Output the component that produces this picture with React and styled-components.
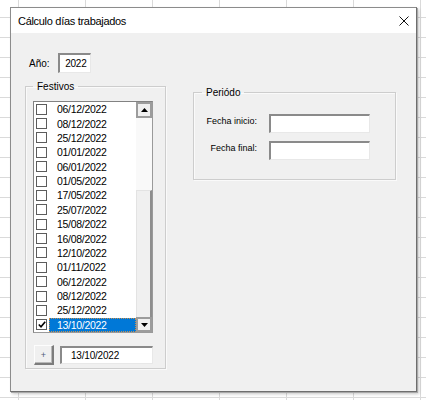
import React from "react";
import styled, { createGlobalStyle } from "styled-components";

const GlobalStyle = createGlobalStyle`
  html, body { margin: 0; padding: 0; }
  body { background: #fff; font-family: "Liberation Sans", Arial, sans-serif; color: #000; }
`;

const Sheet = styled.div`
  width: 426px;
  height: 400px;
  box-sizing: border-box;
  padding: 7px 0 0 10px;
  overflow: hidden;
  background-color: #fff;
  background-image: linear-gradient(to right, #dadada 1px, transparent 1px),
    linear-gradient(to bottom, #dadada 1px, transparent 1px);
  background-size: 67px 20px;
  background-position: 18px 17px;
`;

const Dialog = styled.div`
  width: 407px;
  height: 385px;
  box-sizing: border-box;
  border: 1px solid #8c8c8c;
  border-right-color: #6e6e6e;
  border-bottom-color: #6e6e6e;
  box-shadow: 1px 1px 0 #a9a9a9, 2px 2px 3px rgba(0, 0, 0, 0.22);
  background: #f0f0f0;
  display: flex;
  flex-direction: column;
`;

const TitleBar = styled.div`
  height: 25px;
  flex: none;
  background: #fff;
  display: flex;
  align-items: center;
  justify-content: space-between;
  padding: 0 7px 0 7px;
`;

const Title = styled.span`
  font-size: 11px;
  letter-spacing: -0.3px;
  color: #000;
`;

const Body = styled.div`
  flex: 1;
  padding: 20px 0 0 14px;
`;

const YearRow = styled.div`
  display: flex;
  align-items: center;
  gap: 8px;
  margin-left: 4px;
  height: 20px;
`;

const Label = styled.span`
  font-size: ${(p) => p.$size || 10}px;
  line-height: ${(p) => (p.$size ? "10px" : "normal")};
  padding-top: ${(p) => (p.$size ? "2px" : "0")};
  white-space: nowrap;
`;

const TextBox = styled.div`
  box-sizing: border-box;
  width: ${(p) => p.$w}px;
  height: ${(p) => p.$h}px;
  background: #fff;
  border-style: solid;
  border-width: 2px 1px 1px 2px;
  border-color: #8a8a8a #e8e8e8 #e8e8e8 #8a8a8a;
  display: flex;
  align-items: center;
  justify-content: ${(p) => (p.$right ? "flex-end" : "flex-start")};
  padding: ${(p) => (p.$right ? "0 3px 0 0" : "0 0 0 9px")};
  font-size: 10px;
  letter-spacing: -0.2px;
`;

const Columns = styled.div`
  display: flex;
  align-items: flex-start;
  gap: 27px;
  margin-top: 8px;
`;

const Frame = styled.fieldset`
  margin: ${(p) => p.$top || 0}px 0 0 0;
  min-width: 0;
  box-sizing: border-box;
  width: ${(p) => p.$w}px;
  border: 1px solid #cdcdcd;
  box-shadow: 1px 1px 0 #fafafa, inset 1px 1px 0 #fafafa;
  padding: ${(p) => p.$pad};
`;

const Legend = styled.legend`
  font-size: 10px;
  line-height: 11px;
  padding: 0 4px;
  margin-left: ${(p) => p.$ml || 0}px;
`;

const ListBox = styled.div`
  box-sizing: border-box;
  width: 120px;
  height: 232px;
  background: #fff;
  border: 1px solid;
  border-color: #828282 #9a9a9a #9a9a9a #828282;
  display: flex;
`;

const Items = styled.div`
  flex: 1;
  display: flex;
  flex-direction: column;
`;

const Row = styled.div`
  height: 14.375px;
  display: flex;
  align-items: center;
`;

const Check = styled.span`
  box-sizing: border-box;
  width: 11px;
  height: 11px;
  margin-left: 2px;
  flex: none;
  border: 1.5px solid #5c5c5c;
  background: #fff;
  display: flex;
  align-items: center;
  justify-content: center;
`;

const ItemText = styled.span`
  flex: 1;
  height: 100%;
  box-sizing: border-box;
  margin-left: 2px;
  padding-left: 8px;
  display: flex;
  align-items: center;
  font-size: 10.5px;
  letter-spacing: -0.3px;
  background: ${(p) => (p.$selected ? "#0078d7" : "transparent")};
  color: ${(p) => (p.$selected ? "#fff" : "#000")};
  outline: ${(p) => (p.$selected ? "1px dotted #c89050" : "none")};
  outline-offset: -1px;
`;

const ScrollBar = styled.div`
  width: 16px;
  flex: none;
  display: flex;
  flex-direction: column;
  background: #f7f7f7;
`;

const ScrollBtn = styled.div`
  box-sizing: border-box;
  height: ${(p) => p.$h}px;
  flex: none;
  background: #f0f0f0;
  border: 2px solid #9c9c9c;
  display: flex;
  align-items: center;
  justify-content: center;
`;

const Track = styled.div`
  height: ${(p) => p.$h}px;
  flex: none;
  background: #f9f9f9;
`;

const Thumb = styled.div`
  flex: 1;
  box-sizing: border-box;
  background: #f0f0f0;
  border-left: 1px solid #e3e3e3;
  border-right: 2px solid #8e8e8e;
  border-top: 1px solid #e3e3e3;
`;

const BottomRow = styled.div`
  display: flex;
  align-items: center;
  gap: 6px;
  margin-top: 12px;
  height: 20px;
`;

const PlusButton = styled.div`
  box-sizing: border-box;
  width: 20px;
  height: 20px;
  margin-left: 1px;
  background: #f0f0f0;
  border-style: solid;
  border-width: 1px 2px 2px 1px;
  border-color: #fdfdfd #7c7c7c #7c7c7c #fdfdfd;
  box-shadow: inset -1px -1px 0 #b8b8b8;
  display: flex;
  align-items: center;
  justify-content: center;
  font-size: 9px;
  color: #4f5d7a;
`;

const FormGrid = styled.div`
  display: grid;
  grid-template-columns: 51px 101px;
  column-gap: 12px;
  row-gap: 8px;
  align-items: start;
  justify-items: end;
`;

const Arrow = ({ up }) => (
  <svg width="7" height="4" viewBox="0 0 7 4">
    <path d={up ? "M0 4 L3.5 0 L7 4 Z" : "M0 0 L7 0 L3.5 4 Z"} fill="#000" />
  </svg>
);

const CloseIcon = () => (
  <svg width="10" height="10" viewBox="0 0 10 10">
    <path d="M0.5 0.5 L9.5 9.5 M9.5 0.5 L0.5 9.5" stroke="#111" strokeWidth="1" />
  </svg>
);

const Tick = () => (
  <svg width="8" height="7" viewBox="0 0 8 7">
    <path d="M0.8 3.5 L3 5.8 L7.2 0.8" stroke="#000" strokeWidth="1.6" fill="none" />
  </svg>
);

const dates = [
  "06/12/2022",
  "08/12/2022",
  "25/12/2022",
  "01/01/2022",
  "06/01/2022",
  "01/05/2022",
  "17/05/2022",
  "25/07/2022",
  "15/08/2022",
  "16/08/2022",
  "12/10/2022",
  "01/11/2022",
  "06/12/2022",
  "08/12/2022",
  "25/12/2022",
  "13/10/2022",
];

export default function App() {
  return (
    <>
      <GlobalStyle />
      <Sheet>
        <Dialog>
          <TitleBar>
            <Title>Cálculo días trabajados</Title>
            <CloseIcon />
          </TitleBar>
          <Body>
            <YearRow>
              <Label>Año:</Label>
              <TextBox $w={33} $h={20} $right>
                2022
              </TextBox>
            </YearRow>
            <Columns>
              <Frame $w={141} $pad="9px 12px 3px 7px">
                <Legend>Festivos</Legend>
                <ListBox>
                  <Items>
                    {dates.map((d, i) => {
                      const sel = i === dates.length - 1;
                      return (
                        <Row key={i}>
                          <Check>{sel && <Tick />}</Check>
                          <ItemText $selected={sel}>{d}</ItemText>
                        </Row>
                      );
                    })}
                  </Items>
                  <ScrollBar>
                    <ScrollBtn $h={16}>
                      <Arrow up />
                    </ScrollBtn>
                    <Track $h={72} />
                    <Thumb />
                    <ScrollBtn $h={15}>
                      <Arrow />
                    </ScrollBtn>
                  </ScrollBar>
                </ListBox>
                <BottomRow>
                  <PlusButton>+</PlusButton>
                  <TextBox $w={93} $h={18}>
                    13/10/2022
                  </TextBox>
                </BottomRow>
              </Frame>
              <Frame $w={203} $top={6} $pad="16px 25px 19px 12px">
                <Legend $ml={-4}>Periódo</Legend>
                <FormGrid>
                  <Label $size={9}>Fecha inicio:</Label>
                  <TextBox $w={101} $h={19} />
                  <Label $size={9}>Fecha final:</Label>
                  <TextBox $w={101} $h={19} />
                </FormGrid>
              </Frame>
            </Columns>
          </Body>
        </Dialog>
      </Sheet>
    </>
  );
}
